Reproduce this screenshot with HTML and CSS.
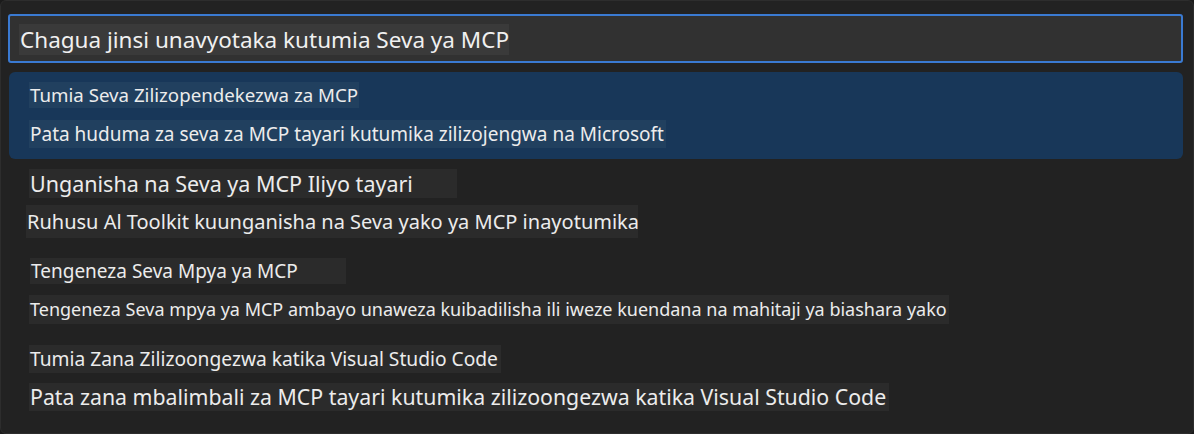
FILE: index.html
```html
<!DOCTYPE html>
<html lang="sw">
<head>
<meta charset="utf-8">
<title>Quick Pick</title>
<link rel="stylesheet" href="styles.css">
</head>
<body>
<div class="panel">
  <div class="input">
    <span class="tb tb-input">Chagua jinsi unavyotaka kutumia Seva ya MCP</span>
  </div>
  <div class="item selected">
    <span class="tb sel t1">Tumia Seva Zilizopendekezwa za MCP</span>
    <span class="tb sel d1">Pata huduma za seva za MCP tayari kutumika zilizojengwa na Microsoft</span>
  </div>
  <div class="item g2">
    <span class="tb t2">Unganisha na Seva ya MCP Iliyo tayari</span>
    <span class="tb d2">Ruhusu Al Toolkit kuunganisha na Seva yako ya MCP inayotumika</span>
  </div>
  <div class="item g3">
    <span class="tb t3">Tengeneza Seva Mpya ya MCP</span>
    <span class="tb d3">Tengeneza Seva mpya ya MCP ambayo unaweza kuibadilisha ili iweze kuendana na mahitaji ya biashara yako</span>
  </div>
  <div class="item g4">
    <span class="tb t4">Tumia Zana Zilizoongezwa katika Visual Studio Code</span>
    <span class="tb d4">Pata zana mbalimbali za MCP tayari kutumika zilizoongezwa katika Visual Studio Code</span>
  </div>
</div>
</body>
</html>
```
FILE: styles.css
```css
html, body {
  margin: 0;
  padding: 0;
  background: #1b1b1b;
}
body {
  width: 1194px;
  height: 434px;
  overflow: hidden;
  font-family: "Noto Sans", "Open Sans", sans-serif;
  color: #ececec;
}
.panel {
  box-sizing: border-box;
  width: 1194px;
  height: 434px;
  background: #222222;
  border: 1px solid #2d2d2d;
  border-radius: 6px;
  padding: 13px 10px 0 7px;
  display: flex;
  flex-direction: column;
}
.input {
  box-sizing: border-box;
  height: 49px;
  border: 2px solid #3a7ad2;
  border-radius: 3px;
  background: #313131;
  padding: 8px 0 0 9px;
  display: flex;
  align-items: flex-start;
}
.tb {
  display: inline-block;
  white-space: nowrap;
  background: #2b2b2b;
  box-sizing: border-box;
  padding-left: 1px;
}
.tb-input {
  background: #3a3a3a;
  font-size: 22.5px;
  line-height: 31px;
  height: 31px;
  width: 490px;
  color: #f0f0f0;
}
.item {
  display: flex;
  flex-direction: column;
  align-items: flex-start;
  padding-left: 21px;
}
.selected {
  margin-top: 9px;
  margin-left: 1px;
  padding: 10px 0 11px 20px;
  height: 87px;
  box-sizing: border-box;
  background: #183759;
  border-radius: 6px;
  gap: 12px;
}
.tb.sel { background: #21405f; }
.t1 { font-size: 18.7px; line-height: 26px; height: 26px; width: 330px; }
.d1 { font-size: 19px; line-height: 28px; height: 28px; width: 637px; }

.g2 { margin-top: 10px; gap: 7px; }
.t2 { font-size: 21.5px; line-height: 29px; height: 29px; width: 428px; }
.d2 { font-size: 20px; line-height: 33px; height: 33px; width: 612px; margin-left: -3px; }

.g3 { margin-top: 20px; gap: 11px; }
.t3 { font-size: 19px; line-height: 26px; height: 26px; width: 316px; margin-left: 1px; }
.d3 { font-size: 18px; line-height: 29px; height: 29px; width: 920px; }

.g4 { margin-top: 21px; gap: 10px; }
.t4 { font-size: 19.2px; line-height: 28px; height: 28px; width: 472px; }
.d4 { font-size: 21.3px; line-height: 28px; height: 28px; width: 860px; }
```
